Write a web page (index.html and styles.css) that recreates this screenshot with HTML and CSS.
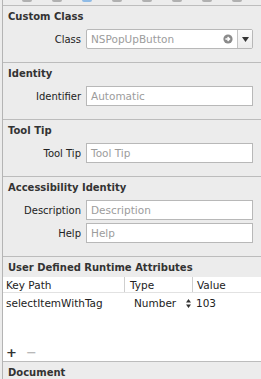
FILE: index.html
```html
<!DOCTYPE html>
<html lang="en">
<head>
  <meta charset="UTF-8" />
  <title>Identity Inspector</title>
  <link rel="stylesheet" href="styles.css">
</head>
<body>
  <div class="panel">

    <!-- inspector tabs, scrolled mostly out of view -->
    <div class="tabs">
      <span class="tab"></span>
      <span class="tab"></span>
      <span class="tab active"></span>
      <span class="tab"></span>
      <span class="tab"></span>
      <span class="tab"></span>
      <span class="tab"></span>
      <span class="tab"></span>
    </div>

    <div class="section">
      <h3>Custom Class</h3>
      <div class="row">
        <label>Class</label>
        <div class="combo">
          <span class="combo-text">NSPopUpButton</span>
          <svg class="go" width="10" height="10" viewBox="0 0 10 10">
            <circle cx="5" cy="5" r="4.6" fill="#8a8a8a"/>
            <path d="M2.4 5h4M4.6 3l2 2-2 2" stroke="#fff" stroke-width="1.4" fill="none"/>
          </svg>
          <span class="combo-btn">
            <svg width="7" height="5" viewBox="0 0 7 5"><path d="M0 0h7L3.5 5z" fill="#333"/></svg>
          </span>
        </div>
      </div>
    </div>

    <div class="section">
      <h3>Identity</h3>
      <div class="row">
        <label>Identifier</label>
        <div class="field">Automatic</div>
      </div>
    </div>

    <div class="section">
      <h3>Tool Tip</h3>
      <div class="row">
        <label>Tool Tip</label>
        <div class="field">Tool Tip</div>
      </div>
    </div>

    <div class="section">
      <h3>Accessibility Identity</h3>
      <div class="row">
        <label>Description</label>
        <div class="field">Description</div>
      </div>
      <div class="row">
        <label>Help</label>
        <div class="field">Help</div>
      </div>
    </div>

    <div class="section attrs">
      <h3>User Defined Runtime Attributes</h3>
      <div class="table">
        <div class="thead">
          <span class="col-key">Key Path</span>
          <span class="col-type">Type</span>
          <span class="col-value">Value</span>
        </div>
        <div class="trow">
          <span class="col-key">selectItemWithTag</span>
          <span class="col-type">Number
            <svg class="stepper" width="5" height="9" viewBox="0 0 5 9"><path d="M0 3.5L2.5 0 5 3.5zM0 5.5L2.5 9 5 5.5z" fill="#333"/></svg>
          </span>
          <span class="col-value">103</span>
        </div>
        <div class="table-tools">
          <span>+</span>
          <span class="dim">&minus;</span>
        </div>
      </div>
    </div>

    <div class="section">
      <h3>Document</h3>
    </div>

  </div>
</body>
</html>
```

FILE: styles.css
```css
* {
  box-sizing: border-box;
}

body {
  margin: 0;
  background: #ececec;
  font-family: "DejaVu Sans", sans-serif;
  font-size: 10px;
  color: #222;
  overflow: hidden;
}

.panel {
  margin-left: 2px;
  border-left: 1px solid #b4b4b4;
  height: 379px;
  overflow: hidden;
}

.tabs {
  height: 6px;
  border-bottom: 1px solid #bdbdbd;
  display: flex;
  gap: 20px;
  padding-left: 19px;
  overflow: hidden;
}

.tab {
  width: 10px;
  height: 2px;
  background: #b0b0b0;
  border-radius: 0 0 2px 2px;
}

.tab.active {
  background: #8fbbe6;
}

.section {
  border-top: 1px solid #bcbcbc;
  padding: 0 8px 13px 0;
}

.tabs + .section {
  border-top: none;
}

h3 {
  margin: 0;
  padding: 4px 0 0 5px;
  height: 23px;
  line-height: 14px;
  font-size: 10px;
  font-weight: bold;
  color: #333;
}

.row {
  display: flex;
  align-items: center;
  gap: 5px;
  margin-bottom: 3px;
}

.row:last-child {
  margin-bottom: 0;
}

label {
  width: 78px;
  text-align: right;
}

.field,
.combo {
  flex: 1;
  height: 20px;
  background: #fff;
  border: 1px solid #b8b8b8;
  color: #9c9c9c;
  padding: 0 4px;
  line-height: 18px;
  font-size: 10.5px;
}

.combo {
  display: flex;
  align-items: center;
  padding-right: 0;
  border-radius: 2px;
}

.combo-text {
  flex: 1;
}

.go {
  margin-right: 4px;
}

.combo-btn {
  width: 15px;
  height: 18px;
  border-left: 1px solid #c4c4c4;
  background: linear-gradient(#fbfbfb, #ececec);
  display: flex;
  align-items: center;
  justify-content: center;
}

.attrs {
  padding: 0;
}

.attrs h3 {
  height: 20px;
}

.table {
  background: #fff;
  height: 84px;
  display: flex;
  flex-direction: column;
}

.thead,
.trow {
  display: flex;
  height: 16px;
  line-height: 16px;
  font-size: 10.5px;
}

.thead {
  border-bottom: 1px solid #e2e2e2;
}

.trow {
  margin-top: 2px;
}

.col-key {
  width: 121px;
  padding-left: 3px;
}

.col-type {
  width: 68px;
  padding-left: 5px;
  display: flex;
  align-items: center;
  gap: 10px;
}

.trow .col-type {
  padding-left: 10px;
}

.col-value {
  padding-left: 4px;
}

.thead .col-type,
.thead .col-value {
  border-left: 1px solid #cfcfcf;
}

.table-tools {
  margin-top: auto;
  padding: 0 0 1px 3px;
  display: flex;
  gap: 9px;
  font-size: 13px;
  line-height: 14px;
  font-weight: bold;
  color: #333;
}

.table-tools .dim {
  color: #a8a8a8;
  font-weight: normal;
}
```
